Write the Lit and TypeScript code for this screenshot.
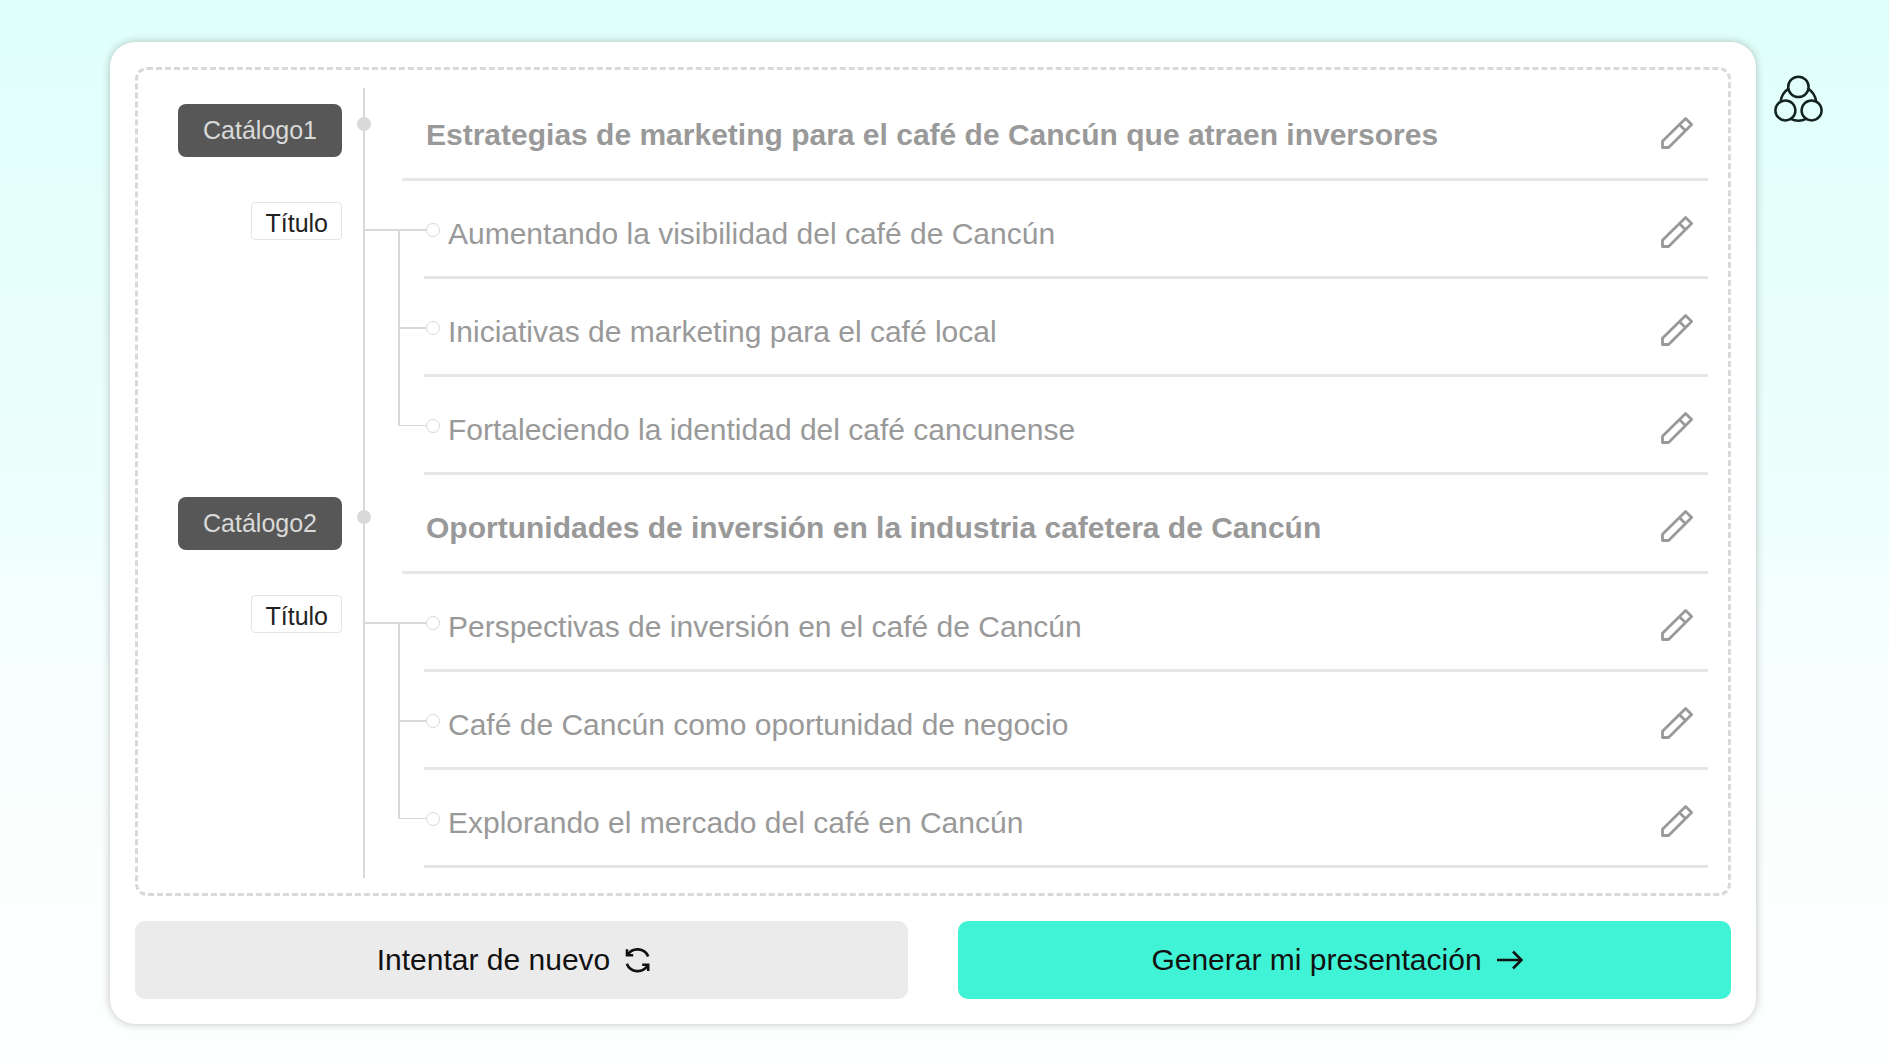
import { LitElement, html, css, svg } from "lit";
import { customElement, property } from "lit/decorators.js";

interface Catalog {
  title: string;
  items: string[];
}

const CATALOGS: Catalog[] = [
  {
    title: "Estrategias de marketing para el café de Cancún que atraen inversores",
    items: [
      "Aumentando la visibilidad del café de Cancún",
      "Iniciativas de marketing para el café local",
      "Fortaleciendo la identidad del café cancunense",
    ],
  },
  {
    title: "Oportunidades de inversión en la industria cafetera de Cancún",
    items: [
      "Perspectivas de inversión en el café de Cancún",
      "Café de Cancún como oportunidad de negocio",
      "Explorando el mercado del café en Cancún",
    ],
  },
];

const pencilShape = svg`
  <path d="M1.5 30.5V24.3L24.6 1.6L30.6 7.6L7.6 30.5Z" />
  <path d="M18.6 7.8L24.6 13.8" />
`;

@customElement("outline-section")
export class OutlineSection extends LitElement {
  @property({ attribute: false }) catalog!: Catalog;
  @property({ type: Number }) number = 1;

  static styles = css`
    :host {
      display: grid;
      grid-template-columns: 204px minmax(0, 1fr);
      column-gap: 60px;
    }
    .labels {
      display: flex;
      flex-direction: column;
      align-items: flex-end;
      gap: 45px;
      padding-top: 22px;
      font-size: 25px;
    }
    .tag {
      padding: 0 25px;
      line-height: 53px;
      border-radius: 8px;
      background: #575757;
      color: #d9d9d9;
    }
    .sub-tag {
      padding: 4px 13px 0;
      line-height: 32px;
      border: 1px solid #e4e4e4;
      border-radius: 4px;
      color: #222;
    }
    .row {
      position: relative;
      display: flex;
      align-items: center;
      justify-content: space-between;
      gap: 24px;
      box-sizing: border-box;
      min-height: 98px;
      padding: 10px 15px 0 24px;
      border-bottom: 3px solid #e6e6e6;
      color: #999;
      font-size: 30px;
      line-height: 36px;
    }
    .heading {
      min-height: 99px;
    }
    .heading::before {
      content: "";
      position: absolute;
      left: -45px;
      top: 35px;
      width: 14px;
      height: 14px;
      border-radius: 50%;
      background: #d9d9d9;
    }
    .text {
      margin: 0;
      font: inherit;
    }
    .heading .text {
      font-weight: 700;
    }
    .items {
      position: relative;
      margin: 0 0 0 22px;
      padding: 0;
      list-style: none;
    }
    .items::before {
      content: "";
      position: absolute;
      left: -26px;
      top: 49px;
      bottom: 49px;
      width: 2px;
      background: #d9d9d9;
    }
    .item::before {
      content: "";
      position: absolute;
      left: -26px;
      top: 48px;
      width: 28px;
      height: 2px;
      background: #d9d9d9;
    }
    .item:last-child::before {
      height: 1px;
    }
    .item:first-child::before {
      left: -61px;
      width: 63px;
    }
    .item::after {
      content: "";
      position: absolute;
      left: 2px;
      top: 42px;
      width: 12px;
      height: 12px;
      border: 1px solid #d9d9d9;
      border-radius: 50%;
      background: #fff;
    }
    .edit {
      flex: none;
      display: flex;
      padding: 0 0 4px;
      border: 0;
      background: none;
      color: #999;
      cursor: pointer;
    }
    .pencil {
      width: 32px;
      height: 32px;
      fill: none;
      stroke: currentColor;
      stroke-width: 2.8;
      stroke-linejoin: round;
    }
  `;

  private editButton(text: string) {
    return html`<button class="edit" type="button" aria-label="Editar: ${text}">
      <svg class="pencil" viewBox="0 0 32 32" aria-hidden="true">${pencilShape}</svg>
    </button>`;
  }

  render() {
    const { title, items } = this.catalog;
    return html`
      <div class="labels">
        <span class="tag">Catálogo${this.number}</span>
        <span class="sub-tag">Título</span>
      </div>
      <div class="content">
        <div class="row heading">
          <h2 class="text">${title}</h2>
          ${this.editButton(title)}
        </div>
        <ul class="items">
          ${items.map(
            (item) => html`<li class="row item">
              <span class="text">${item}</span>
              ${this.editButton(item)}
            </li>`
          )}
        </ul>
      </div>
    `;
  }
}

@customElement("app-root")
export class AppRoot extends LitElement {
  static styles = css`
    :host {
      display: flex;
      align-items: flex-start;
      gap: 18px;
      box-sizing: border-box;
      min-height: 100vh;
      padding: 42px 66px 39px 110px;
      background: linear-gradient(#e0fffa 0%, #e3fffb 13%, #e9fffb 32%, #effffd 50%, #f6ffff 60%, #fafffe 78%, #fdfffe 100%);
      font-family: "Liberation Sans", Arial, sans-serif;
    }
    .card {
      flex: 1;
      min-width: 0;
      box-sizing: border-box;
      display: flex;
      flex-direction: column;
      gap: 25px;
      padding: 25px;
      border-radius: 25px;
      background: #fff;
      box-shadow: 0 0 8px rgba(0, 0, 0, 0.25);
    }
    .outline {
      padding: 12px 20px 25px 0;
      border: 3px dashed #d9d9d9;
      border-radius: 12px;
    }
    .tree {
      position: relative;
    }
    .tree::before {
      content: "";
      position: absolute;
      left: 225px;
      top: 6px;
      bottom: -10px;
      width: 2px;
      background: #d9d9d9;
    }
    .actions {
      display: grid;
      grid-template-columns: 1fr 1fr;
      gap: 50px;
    }
    .action {
      display: flex;
      align-items: center;
      justify-content: center;
      min-height: 78px;
      padding: 0;
      border: 0;
      border-radius: 10px;
      background: #ebebeb;
      color: #111;
      font-family: inherit;
      font-size: 30px;
      cursor: pointer;
    }
    .primary {
      background: #40f3d6;
    }
    .icon {
      width: 26px;
      height: 26px;
      margin: 0 15px;
      fill: none;
      stroke: currentColor;
      stroke-width: 2.6;
    }
    .theme {
      flex: none;
      display: flex;
      margin-top: 33px;
      padding: 0;
      border: 0;
      background: none;
      color: #14231f;
      cursor: pointer;
    }
    .circles {
      width: 49px;
      height: 47px;
      fill: none;
      stroke: currentColor;
      stroke-width: 2.5;
    }
  `;

  render() {
    return html`
      <main class="card">
        <div class="outline">
          <div class="tree">
            ${CATALOGS.map(
              (catalog, i) =>
                html`<outline-section .catalog=${catalog} .number=${i + 1}></outline-section>`
            )}
          </div>
        </div>
        <div class="actions">
          <button class="action" type="button">
            Intentar de nuevo
            <svg class="icon" viewBox="0 0 26 26" aria-hidden="true">
              <path d="M2.6 8A11.6 11.6 0 0 1 23.2 9.4" />
              <path d="M2 2.2V8.2H8.2" />
              <path d="M1.8 16.8A11.6 11.6 0 0 0 22.6 18.4" />
              <path d="M17.2 17.8H23.2V24" />
            </svg>
          </button>
          <button class="action primary" type="button">
            Generar mi presentación
            <svg class="icon" viewBox="0 0 26 26" aria-hidden="true">
              <path d="M0 13H24.5M16 4.5L24.5 13L16 21.5" />
            </svg>
          </button>
        </div>
      </main>
      <button class="theme" type="button" aria-label="Plantillas">
        <svg class="circles" viewBox="0 0 49 47" aria-hidden="true">
          <circle cx="24.4" cy="11.9" r="10.2" />
          <circle cx="11.4" cy="35.4" r="10" />
          <circle cx="37.6" cy="35.4" r="10" />
          <path d="M14.6 13.6A18 18 0 0 0 6.6 26.6" />
          <path d="M34 13.6A18 18 0 0 1 42.2 26.6" />
          <path d="M16.6 43.8A18 18 0 0 0 32.2 43.8" />
        </svg>
      </button>
    `;
  }
}
